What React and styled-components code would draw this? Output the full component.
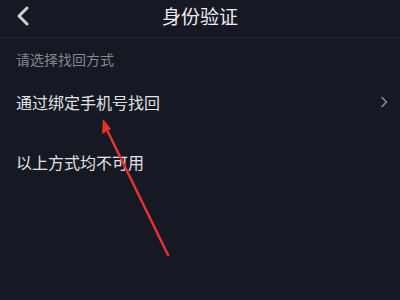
import React from "react";
import styled, { createGlobalStyle } from "styled-components";

const GlobalStyle = createGlobalStyle`
  html, body {
    margin: 0;
    padding: 0;
    background: #161823;
  }
  body {
    font-family: "Noto Sans CJK SC", "Noto Sans", sans-serif;
  }
`;

const Page = styled.div`
  position: relative;
  width: 400px;
  height: 300px;
  overflow: hidden;
  background: #161823;
  color: #e8e8ea;
`;

const TopBar = styled.div`
  height: 37px;
  display: flex;
  align-items: center;
  justify-content: center;
  position: relative;
  border-bottom: 1px solid #23252f;
`;

const Back = styled.div`
  position: absolute;
  left: 14px;
  top: 5px;
  width: 18px;
  height: 22px;
  display: flex;
  align-items: center;
  justify-content: center;
`;

const Title = styled.div`
  font-size: 19px;
  color: #ececee;
  margin-top: -7px;
`;

const Hint = styled.div`
  font-size: 14px;
  color: #86878e;
  padding: 11px 16px 0;
  height: 31px;
`;

const Row = styled.div`
  height: ${(p) => p.h}px;
  display: flex;
  align-items: center;
  justify-content: space-between;
  padding: 0 12px 0 16px;
  font-size: 16px;
  color: #e2e2e6;
`;

const Arrow = styled.svg`
  position: absolute;
  left: 0;
  top: 0;
  pointer-events: none;
`;

export default function App() {
  return (
    <Page>
      <GlobalStyle />
      <TopBar>
        <Back>
          <svg width="14" height="20" viewBox="0 0 14 20">
            <path d="M11 2 L3 10 L11 18" fill="none" stroke="#cfd0d4" strokeWidth="3" strokeLinecap="round" strokeLinejoin="round" />
          </svg>
        </Back>
        <Title>身份验证</Title>
      </TopBar>
      <Hint>请选择找回方式</Hint>
      <Row h={44}>
        <span>通过绑定手机号找回</span>
        <svg width="8" height="12" viewBox="0 0 8 12">
          <path d="M2 1.5 L6.5 6 L2 10.5" fill="none" stroke="#8a8b92" strokeWidth="1.6" strokeLinecap="round" strokeLinejoin="round" />
        </svg>
      </Row>
      <Row h={76}>
        <span>以上方式均不可用</span>
      </Row>
      <Arrow width="400" height="300" viewBox="0 0 400 300">
        <line x1="168" y1="255" x2="107" y2="130" stroke="#e8322e" strokeWidth="2.5" strokeLinecap="round" />
        <polygon points="103,119 102,134 111,129" fill="#e8322e" />
      </Arrow>
    </Page>
  );
}
